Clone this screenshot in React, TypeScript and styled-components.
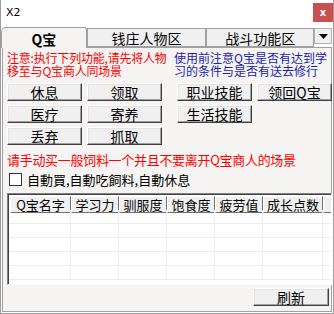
import styled, { createGlobalStyle } from "styled-components";

const GlobalStyle = createGlobalStyle`
  html, body {
    margin: 0;
    padding: 0;
    background: #ffffff;
  }
  body {
    font-family: "Noto Sans CJK SC", "DejaVu Sans", sans-serif;
    font-size: 12px;
  }
`;

const Window = styled.div`
  width: 334px;
  height: 314px;
  box-sizing: border-box;
  border: 1px solid #9c9c9c;
  border-top: none;
  background: #ffffff;
  display: flex;
  flex-direction: column;
  overflow: hidden;
`;

const TitleBar = styled.div`
  height: 26px;
  display: flex;
  align-items: flex-start;
  justify-content: space-between;
`;

const Title = styled.span`
  font-family: "DejaVu Sans", sans-serif;
  font-size: 11px;
  color: #000;
  margin: 6px 0 0 5px;
`;

const CloseButton = styled.div`
  width: 20px;
  height: 19px;
  margin-top: 3px;
  background: #c75050;
  color: #fff;
  font-family: "DejaVu Sans", sans-serif;
  font-weight: bold;
  font-size: 10px;
  display: flex;
  align-items: center;
  justify-content: center;
`;

const TabStrip = styled.div`
  display: flex;
  align-items: flex-end;
  height: 21px;
  position: relative;
  z-index: 1;
`;

const Tab = styled.div<{ $active?: boolean; $width: number }>`
  width: ${(p) => p.$width}px;
  box-sizing: border-box;
  height: ${(p) => (p.$active ? 21 : 19)}px;
  margin-bottom: ${(p) => (p.$active ? -1 : 0)}px;
  border: 1px solid #a0a0a0;
  border-bottom: ${(p) => (p.$active ? "none" : "1px solid #a0a0a0")};
  border-radius: ${(p) => (p.$active ? "5px 3px 0 0" : "0")};
  background: ${(p) => (p.$active ? "#f5f4f2" : "#f0f0f0")};
  font-size: 14px;
  font-weight: ${(p) => (p.$active ? "bold" : "normal")};
  display: flex;
  align-items: center;
  justify-content: center;
  padding-top: ${(p) => (p.$active ? 1 : 0)}px;
  color: #000;
`;

const TabScroll = styled.div`
  width: 18px;
  height: 16px;
  margin: 0 1px 3px 0;
  box-sizing: border-box;
  border: 1px solid #b0b0b0;
  background: #f0f0f0;
  display: flex;
  align-items: center;
  justify-content: center;
`;

const Panel = styled.div`
  flex: 1;
  margin: 0 1px 1px 1px;
  border: 1px solid #a0a0a0;
  background: #f5f4f2;
  padding: 3px 0 0 4px;
  display: flex;
  flex-direction: column;
`;

const Columns = styled.div<{ $gap?: number }>`
  display: grid;
  grid-template-columns: 155px 158px;
  column-gap: 12px;
  margin-top: ${(p) => p.$gap ?? 0}px;
`;

const Note = styled.div<{ $color: string; $spacing?: number }>`
  color: ${(p) => p.$color};
  font-size: 12px;
  line-height: 13px;
  white-space: nowrap;
  letter-spacing: ${(p) => p.$spacing ?? 0}px;
  height: 28px;
`;

const ButtonGroup = styled.div<{ $shift?: number }>`
  display: grid;
  grid-template-columns: 75px 75px;
  column-gap: 5px;
  row-gap: 4px;
  margin-left: ${(p) => p.$shift ?? 0}px;
  align-content: start;
`;

const Button = styled.button<{ $w?: number }>`
  width: ${(p) => p.$w ?? 75}px;
  height: 18px;
  box-sizing: border-box;
  padding: 0;
  margin: 0;
  background: #f0f0f0;
  border: 1px solid;
  border-color: #ffffff #404040 #404040 #ffffff;
  box-shadow: inset -1px -1px #a0a0a0, inset 1px 1px #e3e3e3;
  font-family: "Noto Sans CJK SC", sans-serif;
  font-size: 14px;
  line-height: 14px;
  color: #000;
  display: flex;
  align-items: center;
  justify-content: center;
`;

const Warning = styled.div`
  color: #ff0000;
  font-size: 13px;
  line-height: 14px;
  margin-top: 8px;
  white-space: nowrap;
  letter-spacing: -0.3px;
`;

const CheckRow = styled.label`
  display: flex;
  align-items: center;
  gap: 5px;
  margin-top: 3px;
  margin-left: 2px;
  font-size: 13px;
  color: #000;
`;

const CheckBox = styled.span`
  width: 13px;
  height: 13px;
  box-sizing: border-box;
  border: 1px solid #333;
  background: #fff;
`;

const TableBox = styled.div`
  width: 325px;
  height: 92px;
  margin-top: 4px;
  box-sizing: border-box;
  border: 1px solid;
  border-color: #808080 #ffffff #ffffff #808080;
  box-shadow: inset 1px 1px #404040;
  background: #ffffff;
  overflow: hidden;
`;

const Grid = styled.div`
  display: grid;
  grid-template-columns: 61px 48px 48px 48px 48px 60px 12px;
  grid-auto-rows: 14px;
  padding: 2px 0 0 2px;
`;

const HeadCell = styled.div`
  height: 17px;
  box-sizing: border-box;
  background: #f0f0f0;
  border: 1px solid;
  border-color: #ffffff #707070 #707070 #ffffff;
  font-size: 13px;
  line-height: 15px;
  display: flex;
  align-items: center;
  justify-content: center;
  color: #000;
`;

const HeadRow = styled.div`
  display: contents;
`;

const Cell = styled.div`
  border-right: 1px solid #ececec;
  border-bottom: 1px solid #ececec;
`;

const Footer = styled.div`
  display: flex;
  justify-content: flex-end;
  padding: 3px 2px 0 0;
`;

const headers = ["Q宝名字", "学习力", "驯服度", "饱食度", "疲劳值", "成长点数", ""];

const App = () => {
  return (
    <>
      <GlobalStyle />
      <Window>
        <TitleBar>
          <Title>X2</Title>
          <CloseButton>x</CloseButton>
        </TitleBar>
        <TabStrip>
          <Tab $active $width={86}>
            Q宝
          </Tab>
          <Tab $width={120}>钱庄人物区</Tab>
          <Tab $width={108}>战斗功能区</Tab>
          <TabScroll>
            <svg width="9" height="5" viewBox="0 0 9 5">
              <path d="M0 0h9L4.5 5z" fill="#000" />
            </svg>
          </TabScroll>
        </TabStrip>
        <Panel>
          <Columns>
            <Note $color="#ff0000" $spacing={-0.2}>
              注意:执行下列功能,请先将人物
              <br />
              移至与Q宝商人同场景
            </Note>
            <Note $color="#1c1caa">
              使用前注意Q宝是否有达到学
              <br />
              习的条件与是否有送去修行
            </Note>
          </Columns>
          <Columns $gap={4}>
            <ButtonGroup>
              <Button>休息</Button>
              <Button>领取</Button>
              <Button>医疗</Button>
              <Button>寄养</Button>
              <Button>丢弃</Button>
              <Button>抓取</Button>
            </ButtonGroup>
            <ButtonGroup $shift={3}>
              <Button>职业技能</Button>
              <Button>领回Q宝</Button>
              <Button>生活技能</Button>
            </ButtonGroup>
          </Columns>
          <Warning>请手动买一般饲料一个并且不要离开Q宝商人的场景</Warning>
          <CheckRow>
            <CheckBox />
            自動買,自動吃飼料,自動休息
          </CheckRow>
          <TableBox>
            <Grid>
              <HeadRow>
                {headers.map((h, i) => (
                  <HeadCell key={i}>{h}</HeadCell>
                ))}
              </HeadRow>
              {Array.from({ length: 5 * 7 }).map((_, i) => (
                <Cell key={i} />
              ))}
            </Grid>
          </TableBox>
          <Footer>
            <Button $w={76}>刷新</Button>
          </Footer>
        </Panel>
      </Window>
    </>
  );
};

export default App;
